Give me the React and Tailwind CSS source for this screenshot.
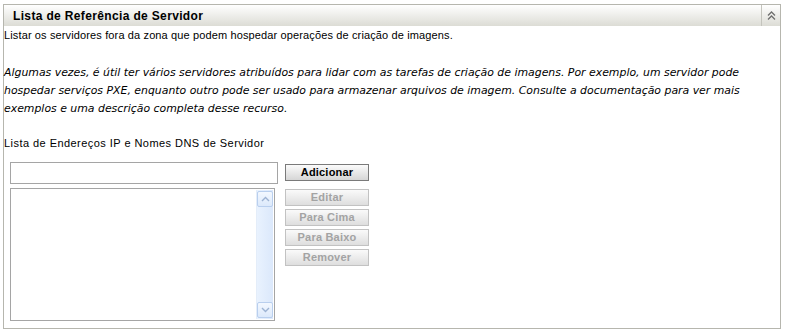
import React from "react";

const font = { fontFamily: '"Liberation Sans", Arial, sans-serif' };
const italicFont = { fontFamily: '"DejaVu Sans", Verdana, sans-serif' };

function ChevronsUp() {
  return (
    <svg width="11" height="11" viewBox="0 0 11 11">
      <path d="M2 5.5 L5.5 2 L9 5.5" fill="none" stroke="#6f6f6f" strokeWidth="1.3" />
      <path d="M2 9.5 L5.5 6 L9 9.5" fill="none" stroke="#6f6f6f" strokeWidth="1.3" />
    </svg>
  );
}

function ScrollArrow({ down }) {
  return (
    <div className="w-[16px] h-[16px] border border-[#b9cfee] rounded-[2px] bg-gradient-to-b from-[#f3f8ff] to-[#dce9fb] flex items-center justify-center">
      <svg width="9" height="6" viewBox="0 0 9 6">
        <path
          d={down ? "M1 1 L4.5 4.5 L8 1" : "M1 5 L4.5 1.5 L8 5"}
          fill="none"
          stroke="#9db3d3"
          strokeWidth="1.4"
        />
      </svg>
    </div>
  );
}

function Btn({ children, disabled }) {
  return (
    <button
      className={
        disabled
          ? "w-[84px] h-[17px] border border-[#c2c2c2] bg-gradient-to-b from-[#fafafa] to-[#dedede] text-[11px] font-bold text-[#a3a3a3] leading-none tracking-[0.2px]"
          : "w-[84px] h-[17px] border border-[#7a7a7a] bg-gradient-to-b from-[#fbfbfb] to-[#d6d6d6] text-[11px] font-bold text-black leading-none tracking-[0.2px]"
      }
      style={font}
    >
      {children}
    </button>
  );
}

export default function App() {
  return (
    <div className="w-[789px] h-[336px] bg-white pt-[4px] pl-[3px]" style={font}>
      <div className="w-[778px] h-[325px] border border-[#b6b6ae] flex flex-col">
        {/* cabeçalho */}
        <div className="h-[21px] flex bg-gradient-to-b from-white to-[#dcdcd5]">
          <div className="flex-1 pl-[9px] flex items-center text-[12px] font-bold text-black tracking-[0.35px]">
            Lista de Referência de Servidor
          </div>
          <div className="w-[19px] border-l border-[#c4c4bd] flex items-center justify-center">
            <ChevronsUp />
          </div>
        </div>

        {/* conteúdo */}
        <div className="text-[11px] text-black leading-[18px]">
          <p className="whitespace-nowrap tracking-[0.13px]">
            Listar os servidores fora da zona que podem hospedar operações de criação de imagens.
          </p>
          <div className="mt-[20px] italic text-[10.9px]" style={italicFont}>
            <p className="whitespace-nowrap">
              Algumas vezes, é útil ter vários servidores atribuídos para lidar com as tarefas de criação de imagens. Por exemplo, um servidor pode
            </p>
            <p className="whitespace-nowrap">
              hospedar serviços PXE, enquanto outro pode ser usado para armazenar arquivos de imagem. Consulte a documentação para ver mais
            </p>
            <p className="whitespace-nowrap">exemplos e uma descrição completa desse recurso.</p>
          </div>
          <p className="mt-[16px] whitespace-nowrap tracking-[0.45px]">
            Lista de Endereços IP e Nomes DNS de Servidor
          </p>
        </div>

        <div className="mt-[10px] pl-[6px] flex gap-[7px]">
          <div className="flex flex-col gap-[4px]">
            <input
              className="w-[268px] h-[22px] border border-[#a5a5a5] outline-none px-1 text-[11px]"
              style={font}
            />
            <div className="w-[265px] h-[133px] border border-[#a5a5a5] flex justify-end p-[1px]">
              <div className="w-[17px] h-full bg-gradient-to-r from-[#e9f2fe] to-[#dbe8fb] border-l border-[#e4edf9] flex flex-col justify-between items-center py-[1px]">
                <ScrollArrow />
                <ScrollArrow down />
              </div>
            </div>
          </div>
          <div className="pt-[2px] flex flex-col gap-[8px]">
            <Btn>Adicionar</Btn>
            <div className="flex flex-col gap-[3px]">
              <Btn disabled>Editar</Btn>
              <Btn disabled>Para Cima</Btn>
              <Btn disabled>Para Baixo</Btn>
              <Btn disabled>Remover</Btn>
            </div>
          </div>
        </div>
      </div>
    </div>
  );
}
